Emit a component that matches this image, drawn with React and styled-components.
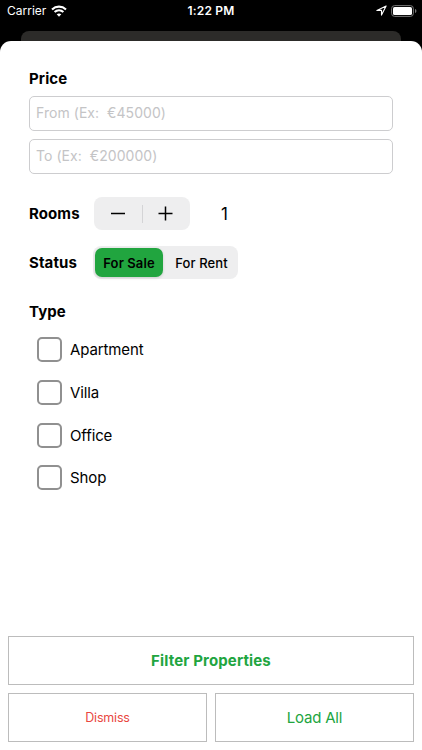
import React, { useState } from 'react';
import styled, { createGlobalStyle, ThemeProvider } from 'styled-components';

const theme = {
  colors: {
    green: '#21a53f',
    red: '#e9473f',
    fill: '#eeeeef',
    border: '#cdcdcf',
    buttonBorder: '#bcbcbc',
    checkbox: '#909090',
    placeholder: '#c4c4c6',
    backCard: '#2c2b29',
  },
};

const GlobalStyle = createGlobalStyle`
  * {
    box-sizing: border-box;
  }

  body {
    margin: 0;
    background: #000;
    font-family: Inter, 'Liberation Sans', sans-serif;
    color: #000;
  }

  button,
  input {
    font-family: inherit;
  }
`;

const Screen = styled.div`
  height: 750px;
  display: flex;
  flex-direction: column;
  background: #000;
  overflow: hidden;
`;

const StatusBar = styled.header`
  height: 31px;
  flex: none;
  display: grid;
  grid-template-columns: 1fr auto 1fr;
  align-items: start;
  padding: 3px 5px 0 7px;
  color: #fff;
  font-size: 12px;
  line-height: 16px;
`;

const Carrier = styled.div`
  display: flex;
  align-items: center;
  gap: 5px;
`;

const Clock = styled.div`
  font-weight: 600;
  letter-spacing: 0.2px;
  margin-left: -2px;
`;

const Indicators = styled.div`
  display: flex;
  align-items: center;
  justify-content: flex-end;
  gap: 4px;
  height: 15px;
`;

const BackCard = styled.div`
  height: 10px;
  flex: none;
  margin: 0 21px;
  border-radius: 8px 8px 0 0;
  background: ${({ theme }) => theme.colors.backCard};
`;

const Sheet = styled.main`
  flex: 1;
  display: flex;
  flex-direction: column;
  justify-content: space-between;
  padding: 28px 8px 8px;
  border-radius: 11px 11px 0 0;
  background: #fff;
`;

const Form = styled.div`
  padding: 0 21px;
`;

const Label = styled.div`
  width: ${({ $width }) => $width || 'auto'};
  font-size: 15px;
  line-height: 20px;
  font-weight: 700;
  letter-spacing: 0.1px;
`;

const PriceInput = styled.input`
  display: block;
  width: 364px;
  height: 35px;
  margin-top: ${({ $first }) => ($first ? '7px' : '8px')};
  padding: 0 6px 2px;
  border: 1px solid ${({ theme }) => theme.colors.border};
  border-radius: 5px;
  outline: none;
  font-size: 14px;
  letter-spacing: 0.05px;
  white-space: pre;

  &::placeholder {
    color: ${({ theme }) => theme.colors.placeholder};
  }
`;

const Row = styled.div`
  display: flex;
  align-items: center;
  height: 33px;
  margin-top: ${({ $top }) => $top};
`;

const Stepper = styled.div`
  display: flex;
  align-items: center;
  width: 96px;
  height: 33px;
  border-radius: 8px;
  background: ${({ theme }) => theme.colors.fill};
`;

const StepButton = styled.button`
  flex: 1;
  height: 100%;
  display: flex;
  align-items: center;
  justify-content: center;
  padding: 0;
  border: none;
  background: none;
`;

const Divider = styled.div`
  width: 1px;
  height: 18px;
  background: #d4d4d6;
`;

const RoomCount = styled.div`
  width: 69px;
  text-align: center;
  font-size: 17px;
`;

const Segments = styled.div`
  display: flex;
  width: 145px;
  height: 33px;
  padding: 2px;
  border-radius: 8px;
  background: ${({ theme }) => theme.colors.fill};
`;

const Segment = styled.button`
  width: ${({ $active }) => ($active ? '68px' : '77px')};
  height: 29px;
  flex: none;
  padding: 0;
  border: none;
  border-radius: 7px;
  background: ${({ $active, theme }) => ($active ? theme.colors.green : 'transparent')};
  box-shadow: ${({ $active }) => ($active ? '0 1px 3px rgba(0, 0, 0, 0.14)' : 'none')};
  color: #000;
  font-size: 13px;
  font-weight: ${({ $active }) => ($active ? 600 : 500)};
  letter-spacing: 0.1px;
  white-space: nowrap;
`;

const TypeList = styled.div`
  display: flex;
  flex-direction: column;
  gap: 17.8px;
  margin-top: 9px;
  padding-left: 8px;
`;

const TypeOption = styled.label`
  display: flex;
  align-items: center;
  gap: 8px;
  height: 25px;
  font-size: 15px;
  letter-spacing: -0.12px;
`;

const Checkbox = styled.input`
  appearance: none;
  width: 25px;
  height: 25px;
  margin: 0;
  border: 2px solid ${({ theme }) => theme.colors.checkbox};
  border-radius: 5px;
  background: #fff;

  &:checked {
    background: ${({ theme }) => theme.colors.green};
  }
`;

const Actions = styled.div`
  display: grid;
  grid-template-columns: 1fr 1fr;
  gap: 8px;
`;

const ActionButton = styled.button`
  grid-column: ${({ $wide }) => ($wide ? '1 / -1' : 'auto')};
  height: 49px;
  padding: 0;
  border: 1px solid ${({ theme }) => theme.colors.buttonBorder};
  background: #fff;
  color: ${({ $color, theme }) => theme.colors[$color || 'green']};
  font-size: ${({ $size }) => $size || '15px'};
  font-weight: ${({ $wide }) => ($wide ? 700 : 400)};
  letter-spacing: ${({ $spacing }) => $spacing || '0'};
`;

const WifiIcon = () => (
  <svg width="16" height="12" viewBox="0 0 16 12" fill="none" stroke="#fff" strokeWidth="2.1">
    <path d="M1 4.4C5 .7 11 .7 15 4.4" />
    <path d="M3.6 7.1C6.1 4.8 9.9 4.8 12.4 7.1" />
    <path d="M8 11.7 5.7 9.3C7 8.2 9 8.2 10.3 9.3Z" fill="#fff" stroke="none" />
  </svg>
);

const LocationIcon = () => (
  <svg width="11" height="11" viewBox="0 0 10 10" fill="none" stroke="#fff" strokeWidth="1" strokeLinejoin="round">
    <path d="M9.2.9.8 4.9H5v4.3Z" />
  </svg>
);

const BatteryIcon = () => (
  <svg width="26" height="12" viewBox="0 0 26 12" fill="none">
    <rect x=".6" y=".6" width="21.8" height="10.8" rx="3" stroke="#777" />
    <rect x="2" y="2" width="19" height="8" rx="1.6" fill="#fff" />
    <path d="M24 4v4c.9-.4 1.4-1.1 1.4-2S24.9 4.4 24 4Z" fill="#777" />
  </svg>
);

const types = ['Apartment', 'Villa', 'Office', 'Shop'];

function App() {
  const [rooms, setRooms] = useState(1);
  const [status, setStatus] = useState('For Sale');

  return (
    <ThemeProvider theme={theme}>
      <GlobalStyle />
      <Screen>
        <StatusBar>
          <Carrier>
            Carrier
            <WifiIcon />
          </Carrier>
          <Clock>1:22 PM</Clock>
          <Indicators>
            <LocationIcon />
            <BatteryIcon />
          </Indicators>
        </StatusBar>
        <BackCard />
        <Sheet>
          <Form>
            <Label>Price</Label>
            <PriceInput $first placeholder="From (Ex:  €45000)" />
            <PriceInput placeholder="To (Ex:  €200000)" />
            <Row $top="23px">
              <Label $width="65px">Rooms</Label>
              <Stepper>
                <StepButton onClick={() => setRooms(Math.max(1, rooms - 1))}>
                  <svg width="16" height="16" viewBox="0 0 16 16" stroke="#000" strokeWidth="1.5">
                    <path d="M1 7.5h14" />
                  </svg>
                </StepButton>
                <Divider />
                <StepButton onClick={() => setRooms(rooms + 1)}>
                  <svg width="16" height="16" viewBox="0 0 16 16" stroke="#000" strokeWidth="1.5">
                    <path d="M.5 7.5h14M7.5.5v14" />
                  </svg>
                </StepButton>
              </Stepper>
              <RoomCount>{rooms}</RoomCount>
            </Row>
            <Row $top="16px">
              <Label $width="64px">Status</Label>
              <Segments>
                {['For Sale', 'For Rent'].map((item) => (
                  <Segment key={item} $active={status === item} onClick={() => setStatus(item)}>
                    {item}
                  </Segment>
                ))}
              </Segments>
            </Row>
            <Row $top="16px">
              <Label>Type</Label>
            </Row>
            <TypeList>
              {types.map((type) => (
                <TypeOption key={type}>
                  <Checkbox type="checkbox" />
                  {type}
                </TypeOption>
              ))}
            </TypeList>
          </Form>
          <Actions>
            <ActionButton $wide $spacing="0.14px">Filter Properties</ActionButton>
            <ActionButton $color="red" $size="12.5px" $spacing="-0.2px">Dismiss</ActionButton>
            <ActionButton $spacing="-0.2px">Load All</ActionButton>
          </Actions>
        </Sheet>
      </Screen>
    </ThemeProvider>
  );
}

export default App;
